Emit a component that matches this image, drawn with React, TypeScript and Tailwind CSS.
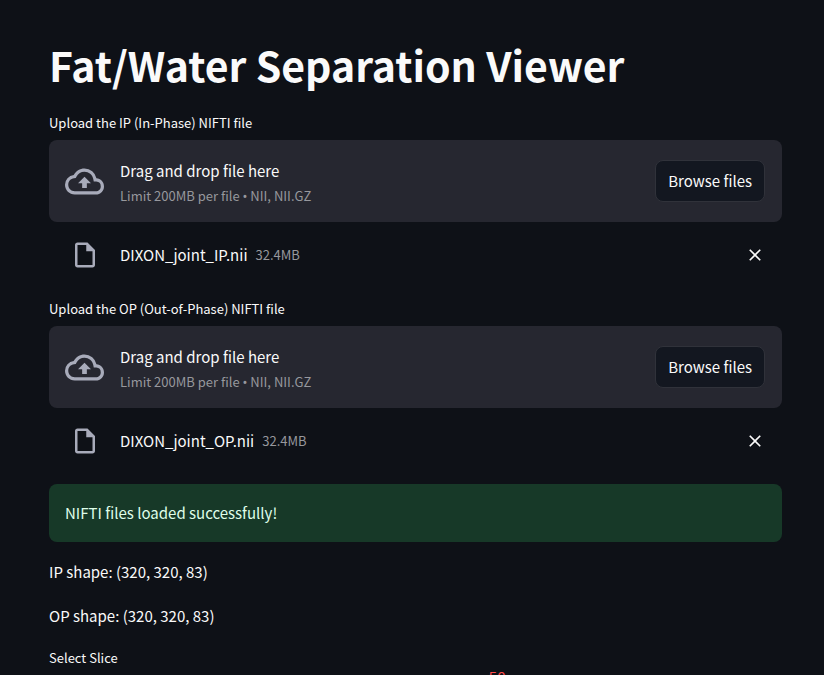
import { MdClose, MdOutlineBackup, MdOutlineInsertDriveFile } from "react-icons/md";

type UploaderProps = {
  id: string;
  label: string;
  fileName: string;
  fileSize: string;
};

function FileUploader({ id, label, fileName, fileSize }: UploaderProps) {
  return (
    <section className="mb-2.5">
      <label id={id} className="mb-1.5 block text-[13px] leading-[22px]">
        {label}
      </label>
      <div
        role="group"
        aria-labelledby={id}
        className="flex items-center rounded-lg bg-[#262730] py-3.5 pr-[17px] pl-4"
      >
        <MdOutlineBackup className="mr-4 size-[39px] shrink-0 text-[#a8abba]" aria-hidden="true" />
        <div className="flex grow flex-col pt-1">
          <span className="text-[15px] leading-[25px]">Drag and drop file here</span>
          <small className="text-[13px] leading-[25px] text-[#97989d]">
            Limit 200MB per file <span className="font-['Noto_Sans',sans-serif] leading-none">•</span> NII, NII.GZ
          </small>
        </div>
        <button
          type="button"
          className="h-[42px] rounded-lg border border-[#30323a] bg-[#131720] px-3 text-[15px]"
        >
          Browse files
        </button>
      </div>
      <div className="flex h-[66px] items-center pr-[17px] pl-4">
        <div className="mr-4 flex w-[39px] shrink-0 justify-center">
          <MdOutlineInsertDriveFile className="size-[30px] text-[#a8abba]" aria-hidden="true" />
        </div>
        <div className="flex grow items-center gap-2">
          <span className="text-[15px] leading-6">{fileName}</span>
          <small className="text-[13px] leading-6 text-[#97989d]">{fileSize}</small>
        </div>
        <button type="button" aria-label={`Remove ${fileName}`}>
          <MdClose className="size-5" aria-hidden="true" />
        </button>
      </div>
    </section>
  );
}

export default function App() {
  return (
    <main className="h-screen overflow-hidden bg-[#0e1117] pt-9 pr-[42px] pl-[49px] font-['Noto_Sans_CJK_SC','Noto_Sans',sans-serif] text-[#fafafa]">
      <h1 className="mb-5 text-[41px] leading-[56px] font-bold">Fat/Water Separation Viewer</h1>
      <FileUploader
        id="ip-label"
        label="Upload the IP (In-Phase) NIFTI file"
        fileName="DIXON_joint_IP.nii"
        fileSize="32.4MB"
      />
      <FileUploader
        id="op-label"
        label="Upload the OP (Out-of-Phase) NIFTI file"
        fileName="DIXON_joint_OP.nii"
        fileSize="32.4MB"
      />
      <div role="alert" className="mb-4 rounded-lg bg-[#173928] p-4 text-[15px] leading-[26px] text-[#dffde9]">
        NIFTI files loaded successfully!
      </div>
      <p className="mb-4 text-[15px] leading-7">IP shape: (320, 320, 83)</p>
      <p className="mb-4 text-[15px] leading-7">OP shape: (320, 320, 83)</p>
      <label htmlFor="slice" className="block text-[13px] leading-6">
        Select Slice
      </label>
      <output htmlFor="slice" className="ml-[60%] block w-fit font-['Liberation_Mono',monospace] text-sm leading-4 text-[#ff4b4b]">
        50
      </output>
      <input id="slice" type="range" min={0} max={82} defaultValue={50} className="w-full accent-[#ff4b4b]" />
    </main>
  );
}
